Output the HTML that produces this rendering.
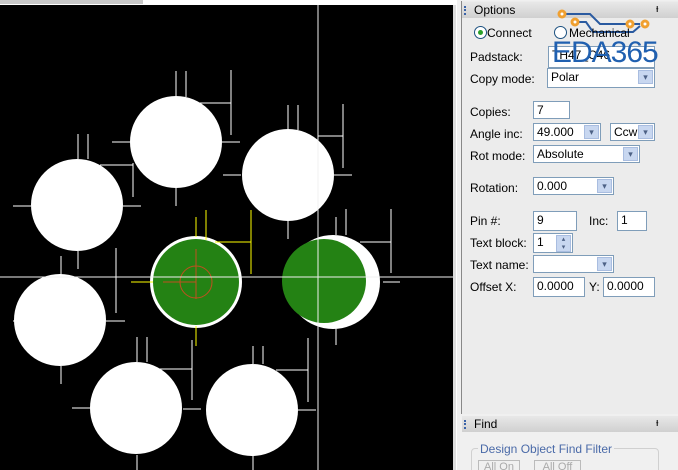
<html><head><style>
html,body{margin:0;width:678px;height:470px;overflow:hidden}
body{background:#fff;font-family:"Liberation Sans",sans-serif;font-size:12px;color:#000;position:relative}
.a{position:absolute}
.lbl{position:absolute;left:470px}
.in{position:absolute;background:#fff;border:1px solid #7f9db9;height:18px;box-sizing:border-box;padding:1px 3px;line-height:15px}
.dd{position:absolute;top:1px;right:1px;width:15px;height:14px;background:#c8d7f0;border:1px solid #a9bde0;box-sizing:border-box;color:#4d6185;font-size:9px;text-align:center;line-height:12px}
</style></head><body>
<div class="a" style="left:0;top:0;width:143px;height:4px;background:#c8c8c8"></div>
<svg class="a" style="left:0;top:5px" width="456" height="465" viewBox="0 5 456 465">
<rect x="0" y="5" width="456" height="465" fill="#000"/>
<g stroke="#fff" stroke-width="1" fill="none">
<path d="M176 71v26M186 71v26M231 70v65M195 103h36M222 142h18M112 142h18M176 188v18"/>
<path d="M288 105v25M298 105v25M343 104v64M318 136h25M334 175h18M223 175h18M288 221v18"/>
<path d="M78 134v25M88 134v25M133 163v34M100 165h33M123 206h18M13 206h18M78 251v17"/>
<path d="M61 256v20M78 256v13M116 248v65M13 321h18M106 321h19M61 366v18"/>
<path d="M137 337v25M147 337v25M192 340v60M158 369h34M72 408h18M183 409h18M137 455v15"/>
<path d="M253 346v18M263 346v18M308 338v64M276 370h32M298 410h18M253 455v15"/>
<path d="M336 217v18M346 209v26M391 209v64M360 242h31M383 282h17M336 327v18"/>
</g>
<g fill="#fff">
<circle cx="176" cy="142" r="46"/><circle cx="288" cy="175" r="46"/><circle cx="77" cy="205" r="46"/>
<circle cx="60" cy="320" r="46"/><circle cx="136" cy="408" r="46"/><circle cx="252" cy="410" r="46"/>
<circle cx="196" cy="282" r="46"/><circle cx="333" cy="282" r="47"/>
</g>
<circle cx="196" cy="282" r="43" fill="#248214"/>
<circle cx="324" cy="281" r="42" fill="#248214"/>
<g stroke="#ffff00" stroke-width="1" fill="none"><path d="M196 217v20M206 210v30M251 210v64M215 242h36M131 282h22M196 326v20"/></g>
<g stroke="#c05020" fill="none"><circle cx="196" cy="282" r="16"/><path d="M196 249v50M163 282h33"/></g>
<path d="M318 5v465M0 277h456" stroke="#f0f0f0" stroke-width="1"/>
<rect x="453" y="5" width="3" height="465" fill="#ddd"/>
</svg>
<div class="a" style="left:457px;top:0;width:221px;height:470px;background:#f0f0f0"></div>
<div class="a" style="left:461px;top:1px;width:217px;height:413px;border-left:1px solid #888;background:#ececec"></div>
<div class="a" style="left:462px;top:2px;width:216px;height:16px;background:linear-gradient(#e8e8e8,#d0d0d0);line-height:16px;padding-left:12px;box-sizing:border-box">Options</div>
<div class="a" style="left:464px;top:6px;width:2px;height:9px;border-left:2px dotted #3a63a8"></div>
<div class="a" style="left:656px;top:3px;font-size:11px">ᵻ</div>
<svg class="a" style="left:550px;top:8px" width="100" height="30"><path d="M12 6h28l10 10h40M25 14h11l7 10h40l7-6" stroke="#2a5aa0" stroke-width="2" fill="none"/><g fill="#fff" stroke="#f0a030" stroke-width="3"><circle cx="12" cy="6" r="3"/><circle cx="25" cy="14" r="3"/><circle cx="80" cy="16" r="3"/><circle cx="95" cy="16" r="3"/></g></svg>
<div class="a" style="left:474px;top:26px;width:11px;height:11px;border:1px solid #1c5180;border-radius:50%;background:#fff"><div style="margin:3px;width:5px;height:5px;border-radius:50%;background:#2aa02a"></div></div>
<div class="a" style="left:487px;top:26px">Connect</div>
<div class="a" style="left:554px;top:26px;width:11px;height:11px;border:1px solid #1c5180;border-radius:50%;background:#fff"></div>
<div class="a" style="left:569px;top:26px">Mechanical</div>
<div class="lbl" style="top:50px">Padstack:</div>
<div class="in" style="left:548px;top:46px;width:107px;height:22px">TH47_C46</div>
<div class="a" style="left:552px;top:36px;font-size:30px;color:#2060b0;letter-spacing:-1px">EDA365</div>
<div class="lbl" style="top:72px">Copy mode:</div>
<div class="in" style="left:547px;top:68px;width:108px;height:20px">Polar<div class="dd">▾</div></div>
<div class="lbl" style="top:105px">Copies:</div>
<div class="in" style="left:533px;top:101px;width:37px">7</div>
<div class="lbl" style="top:127px">Angle inc:</div>
<div class="in" style="left:533px;top:123px;width:68px">49.000<div class="dd">▾</div></div>
<div class="in" style="left:610px;top:123px;width:45px">Ccw<div class="dd">▾</div></div>
<div class="lbl" style="top:149px">Rot mode:</div>
<div class="in" style="left:533px;top:145px;width:107px">Absolute<div class="dd">▾</div></div>
<div class="lbl" style="top:181px">Rotation:</div>
<div class="in" style="left:533px;top:177px;width:81px">0.000<div class="dd">▾</div></div>
<div class="lbl" style="top:214px">Pin #:</div>
<div class="in" style="left:533px;top:211px;width:44px;height:20px">9</div>
<div class="a" style="left:589px;top:214px">Inc:</div>
<div class="in" style="left:617px;top:211px;width:30px;height:20px">1</div>
<div class="lbl" style="top:236px">Text block:</div>
<div class="in" style="left:533px;top:233px;width:40px;height:20px">1<div class="dd" style="height:17px;background:#c8d7f0;font-size:7px;line-height:8px">▴<br>▾</div></div>
<div class="lbl" style="top:258px">Text name:</div>
<div class="in" style="left:533px;top:255px;width:81px">&nbsp;<div class="dd">▾</div></div>
<div class="lbl" style="top:280px">Offset X:</div>
<div class="in" style="left:533px;top:277px;width:52px;height:20px">0.0000</div>
<div class="a" style="left:589px;top:280px">Y:</div>
<div class="in" style="left:603px;top:277px;width:52px;height:20px">0.0000</div>
<div class="a" style="left:462px;top:416px;width:216px;height:16px;background:linear-gradient(#e8e8e8,#d0d0d0);line-height:16px;padding-left:12px;box-sizing:border-box">Find</div>
<div class="a" style="left:464px;top:420px;width:2px;height:9px;border-left:2px dotted #3a63a8"></div>
<div class="a" style="left:656px;top:417px;font-size:11px">ᵻ</div>
<div class="a" style="left:471px;top:448px;width:186px;height:30px;border:1px solid #d0d0d0;border-radius:4px"></div>
<div class="a" style="left:478px;top:442px;background:#f0f0f0;color:#4a6aa8;padding:0 2px">Design Object Find Filter</div>
<div class="a" style="left:478px;top:460px;width:40px;height:14px;border:1px solid #bbb;color:#aaa;text-align:center;font-size:11px">All On</div>
<div class="a" style="left:534px;top:460px;width:45px;height:14px;border:1px solid #bbb;color:#aaa;text-align:center;font-size:11px">All Off</div>
</body></html>
